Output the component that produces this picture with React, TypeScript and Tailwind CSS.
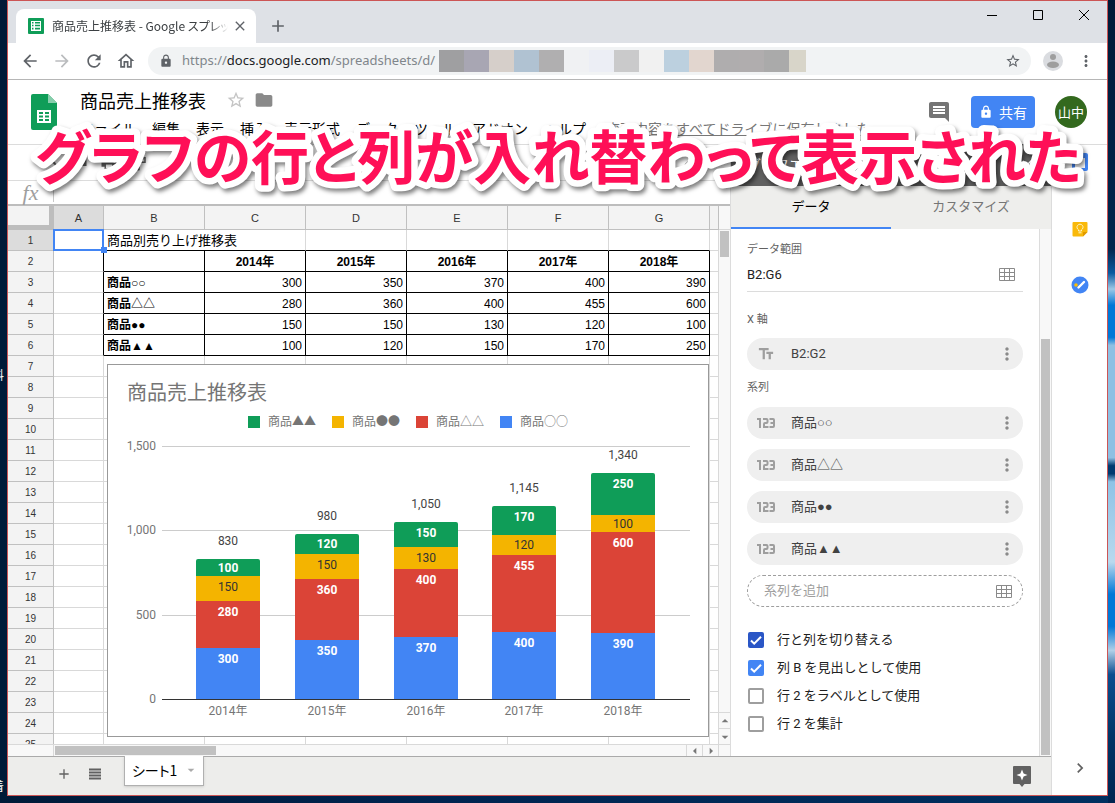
import React, { useState } from 'react';
import {
  MdAdd,
  MdArrowBack,
  MdArrowDropDown,
  MdArrowDropUp,
  MdArrowForward,
  MdArrowLeft,
  MdArrowRight,
  MdChevronRight,
  MdClose,
  MdComment,
  MdFolder,
  MdFormatPaint,
  MdKeyboardArrowUp,
  MdLock,
  MdMoreVert,
  MdOutlineHome,
  MdPrint,
  MdRedo,
  MdRefresh,
  MdStarBorder,
  MdTextFields,
  MdUndo,
} from 'react-icons/md';

const YEARS = ['2014年', '2015年', '2016年', '2017年', '2018年'];
const PRODUCTS = [
  { name: '商品○○', values: [300, 350, 370, 400, 390], color: '#4285f4', text: '#fff' },
  { name: '商品△△', values: [280, 360, 400, 455, 600], color: '#db4437', text: '#fff' },
  { name: '商品●●', values: [150, 150, 130, 120, 100], color: '#f4b400', text: '#333' },
  { name: '商品▲▲', values: [100, 120, 150, 170, 250], color: '#0f9d58', text: '#fff' },
];
const COLUMNS = ['A', 'B', 'C', 'D', 'E', 'F', 'G'];
const MENUS = ['ファイル', '編集', '表示', '挿入', '表示形式', 'データ', 'ツール', 'アドオン', 'ヘルプ'];
const MOSAIC = [
  'bg-[#9f9fa1]', 'bg-[#a8a6b3]', 'bg-[#d6cfca]', 'bg-[#b0c2d2]', 'bg-[#b0afb0]', 'bg-[#f0f1f3]',
  'bg-[#eceef5]', 'bg-[#cacacb]', 'bg-[#f1f1f1]', 'bg-[#bcd0df]', 'bg-[#e2d6cf]', 'bg-[#afadae]',
  'bg-[#b0adae]', 'bg-[#aaaaaa]',
];

const TabStrip = () => (
  <div className="flex h-[42px] shrink-0 bg-[#dee1e6] pl-2">
    <div className="relative mt-2 flex w-60 items-center rounded-t-lg bg-white pr-2 pl-3">
      <svg viewBox="0 0 16 16" className="h-4 w-4 shrink-0">
        <rect width="16" height="16" rx="1" fill="#0f9d58" />
        <path d="M3 3h10v10H3zM4 4v1.5h1.5V4zM7 4v1.5h5V4zM4 6.8v1.4h1.5V6.8zM7 6.8v1.4h5V6.8zM4 9.8v1.7h1.5V9.8zM7 9.8v1.7h5V9.8z" fill="#fff" fillRule="evenodd" />
      </svg>
      <span className="ml-2 min-w-0 flex-1 overflow-hidden text-xs whitespace-nowrap text-[#3c4043] [font-feature-settings:'palt'] [mask-image:linear-gradient(to_right,#000_90%,transparent)]">
        商品売上推移表 - Google スプレッ
      </span>
      <button aria-label="タブを閉じる" className="ml-1 text-[#5f6368]">
        <MdClose className="h-4 w-4" />
      </button>
    </div>
    <button aria-label="新しいタブ" className="mt-2 ml-3 text-[#5f6368]">
      <MdAdd className="h-5 w-5" />
    </button>
    <div className="ml-auto flex h-7 items-center gap-9 pr-[18px] text-black">
      <button aria-label="最小化">
        <svg viewBox="0 0 10 10" className="h-2.5 w-2.5"><path d="M0 5.5h10" stroke="currentColor" /></svg>
      </button>
      <button aria-label="最大化">
        <svg viewBox="0 0 10 10" className="h-2.5 w-2.5"><path d="M.5.5h9v9h-9z" fill="none" stroke="currentColor" /></svg>
      </button>
      <button aria-label="閉じる">
        <svg viewBox="0 0 10 10" className="h-2.5 w-2.5"><path d="M0 0l10 10M10 0L0 10" stroke="currentColor" /></svg>
      </button>
    </div>
  </div>
);

const AddressBar = () => (
  <div className="flex h-[37px] shrink-0 items-center border-b border-[#b6b6b6] pr-3 pl-3 text-[#5f6368]">
    <div className="flex gap-3">
      <button aria-label="戻る"><MdArrowBack className="h-5 w-5" /></button>
      <button aria-label="進む" className="text-[#babcbe]"><MdArrowForward className="h-5 w-5" /></button>
      <button aria-label="再読み込み"><MdRefresh className="h-5 w-5" /></button>
      <button aria-label="ホーム"><MdOutlineHome className="h-5 w-5" /></button>
    </div>
    <label className="ml-3 flex h-7 min-w-0 flex-1 items-center rounded-full bg-[#f1f3f4] pr-2.5 pl-[11px]">
      <MdLock className="h-3.5 w-3.5 shrink-0" />
      <span className="ml-[9px] font-[family-name:'Noto_Sans',sans-serif] text-[13px] text-[#80868b]">
        https://<span className="text-[#202124]">docs.google.com</span>/spreadsheets/d/
      </span>
      <span className="ml-1 flex h-[22px] shrink-0">
        {MOSAIC.map((c) => (
          <span key={c} className={`w-[25px] ${c}`} />
        ))}
        <span className="w-[17px] bg-[#d8d5c9]" />
      </span>
      <input aria-label="アドレス" className="min-w-0 flex-1 bg-transparent outline-none" />
      <MdStarBorder className="h-4 w-4 shrink-0" />
    </label>
    <button aria-label="プロフィール" className="ml-3">
      <svg viewBox="0 0 20 20" className="h-5 w-5">
        <circle cx="10" cy="10" r="10" fill="#dadce0" />
        <circle cx="10" cy="6" r="3" fill="#9e9e9e" />
        <ellipse cx="10" cy="13.8" rx="6" ry="3.2" fill="#9e9e9e" />
      </svg>
    </button>
    <button aria-label="メニュー" className="ml-3.5"><MdMoreVert className="h-[18px] w-[18px]" /></button>
  </div>
);

const DocHeader = () => (
  <header className="flex h-[65px] shrink-0 border-b border-[#dcdcdc] pr-5 pl-[23px]">
    <svg viewBox="0 0 26 36" className="mt-3.5 h-9 w-[26px] shrink-0">
      <path d="M2 0h15l9 9v25a2 2 0 0 1-2 2H2a2 2 0 0 1-2-2V2a2 2 0 0 1 2-2z" fill="#0f9d58" />
      <path d="M17 0l9 9h-9z" fill="#87ceac" />
      <path d="M6 16h14v13H6zM8 18v2h4v-2zM14 18v2h4v-2zM8 21.500v2h4v-2zM14 21.500v2h4v-2zM8 25v2h4v-2zM14 25v2h4v-2z" fill="#fff" fillRule="evenodd" />
    </svg>
    <div className="ml-[23px] pt-1.5">
      <div className="flex h-7 items-center">
        <h1 className="text-lg text-black">商品売上推移表</h1>
        <button aria-label="スターを付ける" className="ml-5 text-[#c4c4c4]"><MdStarBorder className="h-5 w-5" /></button>
        <button aria-label="移動" className="ml-2 text-[#8a8a8a]"><MdFolder className="h-5 w-5" /></button>
      </div>
      <nav className="flex h-7 items-center gap-4 text-sm whitespace-nowrap text-black">
        {MENUS.map((m) => (
          <button key={m}>{m}</button>
        ))}
        <a href="#saved" className="ml-1 text-[#777] underline">変更内容をすべてドライブに保存しました</a>
      </nav>
    </div>
    <div className="ml-auto flex items-center gap-5">
      <button aria-label="コメント" className="text-[#757575]"><MdComment className="h-6 w-6" /></button>
      <button className="flex h-8 items-center gap-1.5 rounded-sm bg-[#4285f4] px-2 text-sm whitespace-nowrap text-white">
        <MdLock className="h-3.5 w-3.5" />共有
      </button>
      <button className="h-8 w-8 rounded-full bg-[#33691e] text-[13px] whitespace-nowrap text-white">山中</button>
    </div>
  </header>
);

const SheetToolbar = () => (
  <>
    <div className="flex h-9 shrink-0 items-center gap-3 border-b border-[#dcdcdc] px-8 text-[#616161]">
      <MdUndo className="h-[18px] w-[18px]" />
      <MdRedo className="h-[18px] w-[18px]" />
      <MdPrint className="h-[18px] w-[18px]" />
      <MdFormatPaint className="h-[18px] w-[18px]" />
      <span className="ml-40 text-xs">.0</span>
      <span className="ml-40 text-xs">10</span>
      <MdKeyboardArrowUp className="ml-auto h-[18px] w-[18px]" />
    </div>
    <label className="flex h-[25px] shrink-0 items-center border-b-2 border-[#bdbdbd]">
      <span className="w-[45px] text-center font-[family-name:'Liberation_Serif',serif] text-[22px] leading-5 text-[#9e9e9e] italic">fx</span>
      <input aria-label="数式" className="h-[18px] flex-1 border-l border-[#c8c8c8] px-2 text-xs outline-none" />
    </label>
  </>
);

// plot area of the embedded chart
const BASE = 334;
const SCALE = 253 / 1500;

const Chart = () => (
  <svg
    viewBox="0 0 600 371"
    role="img"
    aria-label="商品売上推移表"
    className="absolute top-[158px] left-[99px] h-[373px] w-[602px] border border-[#999] bg-white font-[family-name:Roboto,'Noto_Sans_CJK_JP',sans-serif] text-xs"
  >
    <text x="19" y="35" fontSize="20" fill="#757575">商品売上推移表</text>
    {[...PRODUCTS].reverse().map((p, i) => (
      <g key={p.name}>
        <rect x={140 + i * 84} y="51" width="12" height="12" fill={p.color} />
        <text x={160 + i * 84} y="61" fill="#757575">{p.name}</text>
      </g>
    ))}
    {[1500, 1000, 500].map((v) => (
      <g key={v}>
        <rect x="54" y={Math.round(BASE - v * SCALE)} width="528" height="1" fill="#ccc" />
        <text x="48" y={Math.round(BASE - v * SCALE) + 4} textAnchor="end" fill="#757575">{v.toLocaleString('en-US')}</text>
      </g>
    ))}
    <text x="48" y="338" textAnchor="end" fill="#757575">0</text>
    {YEARS.map((year, i) => {
      const x = Math.round(88 + i * 98.8);
      const total = PRODUCTS.reduce((s, p) => s + p.values[i], 0);
      const totalTop = Math.round(BASE - total * SCALE);
      let sum = 0;
      return (
        <g key={year} textAnchor="middle">
          {PRODUCTS.map((p, k) => {
            const bottom = Math.round(BASE - sum * SCALE);
            sum += p.values[i];
            const top = Math.round(BASE - sum * SCALE);
            const h = bottom - top;
            const last = k === PRODUCTS.length - 1;
            return (
              <g key={p.name}>
                {last ? (
                  <path d={`M${x} ${bottom}V${top + 2}q0-2 2-2h60q2 0 2 2V${bottom}z`} fill={p.color} />
                ) : (
                  <rect x={x} y={top} width="64" height={h} fill={p.color} />
                )}
                <text x={x + 32} y={top + Math.min(10.500, h / 2) + 4} fill={p.text} fontWeight={p.text === '#fff' ? 700 : 400}>
                  {p.values[i]}
                </text>
              </g>
            );
          })}
          <text x={x + 32} y={totalTop - 14} fill="#444">{total.toLocaleString('en-US')}</text>
          <text x={x + 32} y="350" fill="#757575">{year}</text>
        </g>
      );
    })}
    <rect x="54" y={BASE} width="528" height="1" fill="#333" />
  </svg>
);

const Cell: React.FC<{ n: number; c: number }> = ({ n, c }) => {
  const inTable = n >= 2 && n <= 6 && c >= 1;
  const right = n >= 2 && n <= 6 ? 'border-r-black' : 'border-r-[#d9d9d9]';
  const bottom = inTable || (n === 1 && c >= 1) ? 'border-b-black' : 'border-b-[#d9d9d9]';
  const base = `h-[21px] border-r border-b px-[3px] pt-px ${right} ${bottom}`;
  if (n === 1 && c === 0) {
    return (
      <td className={`relative ${base}`}>
        <div className="absolute -top-px -left-px h-[22px] w-[51px] border-2 border-[#4285f4]" />
        <div className="absolute -right-1 -bottom-[3px] z-10 h-1.5 w-1.5 bg-[#4285f4]" />
      </td>
    );
  }
  if (n === 1 && c === 1) return <td colSpan={2} className={`text-[13px] ${base}`}>商品別売り上げ推移表</td>;
  if (n === 2 && c >= 2) return <td className={`text-center font-bold ${base}`}>{YEARS[c - 2]}</td>;
  if (inTable && n > 2 && c === 1) return <td className={`font-bold ${base}`}>{PRODUCTS[n - 3].name}</td>;
  if (inTable && n > 2) return <td className={`text-right ${base}`}>{PRODUCTS[n - 3].values[c - 2]}</td>;
  return <td className={base} />;
};

const Sheet = () => (
  <div className="flex min-h-0 flex-1 flex-col">
    <div className="flex min-h-0 flex-1">
      <div className="relative min-w-0 flex-1 overflow-hidden">
        <table className="w-full table-fixed border-separate border-spacing-0 font-[family-name:'Liberation_Sans','Noto_Sans_CJK_JP',sans-serif] text-xs leading-4 whitespace-nowrap text-black">
          <colgroup>
            <col className="w-[46px]" />
            <col className="w-[50px]" />
            {COLUMNS.slice(1).map((c) => (
              <col key={c} className="w-[101px]" />
            ))}
            <col />
          </colgroup>
          <thead>
            <tr className="h-6 bg-[#f3f3f3] text-[11px] text-[#333]">
              <th className="border-r-[5px] border-b-[5px] border-[#bdbdbd]" />
              {COLUMNS.map((c) => (
                <th key={c} className={`border-r border-b border-[#c0c0c0] font-normal ${c === 'A' ? 'bg-[#dcdcdc]' : ''}`}>{c}</th>
              ))}
              <th className="border-r border-b border-[#c0c0c0]" />
            </tr>
          </thead>
          <tbody>
            {Array.from({ length: 25 }, (_, i) => i + 1).map((n) => (
              <tr key={n} className="h-[21px]">
                <th className={`border-r border-b border-[#c0c0c0] pt-px text-[10px] font-normal text-[#333] ${n === 1 ? 'bg-[#dcdcdc]' : 'bg-[#f3f3f3]'}`}>{n}</th>
                {COLUMNS.map((c, i) => (n === 1 && i === 2 ? null : <Cell key={c} n={n} c={i} />))}
                <td className="border-r border-b border-[#d9d9d9]" />
              </tr>
            ))}
          </tbody>
        </table>
        <Chart />
      </div>
      <div className="flex w-[11px] flex-col bg-[#f8f8f8] text-[#777]">
        <div className="h-6 border-b border-[#d9d9d9]" />
        <div className="mx-px mt-px h-[26px] bg-[#c1c1c1]" />
        <button aria-label="上へ" className="mt-auto flex h-4 items-center justify-center border-t border-[#d9d9d9]"><MdArrowDropUp className="h-4 w-4 shrink-0" /></button>
        <button aria-label="下へ" className="flex h-4 items-center justify-center border-t border-[#d9d9d9]"><MdArrowDropDown className="h-4 w-4 shrink-0" /></button>
      </div>
    </div>
    <div className="flex h-3 shrink-0 border-t border-[#d9d9d9] bg-[#f8f8f8] text-[#777]">
      <div className="w-[46px] border-r border-[#d9d9d9]" />
      <div className="mt-px ml-px h-[9px] w-[161px] bg-[#c1c1c1]" />
      <button aria-label="左へ" className="ml-auto flex w-4 items-center justify-center border-l border-[#d9d9d9]"><MdArrowLeft className="h-4 w-4 shrink-0" /></button>
      <button aria-label="右へ" className="flex w-4 items-center justify-center border-l border-[#d9d9d9]"><MdArrowRight className="h-4 w-4 shrink-0" /></button>
      <div className="w-3 border-l border-[#d9d9d9]" />
    </div>
  </div>
);

const GridIcon = () => (
  <svg viewBox="0 0 16 13" className="h-[13px] w-4">
    <path d="M.5.5h15v12H.5zM.5 4.500h15M.5 8.500h15M5.500.5v12M10.500.5v12" fill="none" stroke="#8a8a8a" />
  </svg>
);

const NumberIcon = () => (
  <svg viewBox="0 0 18 10" className="h-2.5 w-[18px]" fill="none" stroke="currentColor" strokeWidth="2">
    <path d="M0 1h3v9" />
    <path d="M6 1h3.500q1 0 1 1v2q0 1-1 1H8q-1 0-1 1v3h4.500" />
    <path d="M12.500 1H16q1 0 1 1v6q0 1-1 1h-3.500M13.500 5H16.500" />
  </svg>
);

const Pill: React.FC<{ icon: React.ReactNode; label: string }> = ({ icon, label }) => (
  <li className="flex h-8 items-center rounded-full bg-[#efefef] pr-1.5 text-[13px] text-[#424242]">
    <span className="flex w-11 shrink-0 pl-2.5 text-[#9e9e9e]">{icon}</span>
    <span className="flex-1">{label}</span>
    <button aria-label={`${label} のオプション`} className="text-[#8a8a8a]"><MdMoreVert className="h-5 w-5" /></button>
  </li>
);

const OPTIONS = [
  { label: '行と列を切り替える', checked: true, box: 'checked:border-[#2a56c6] checked:bg-[#2a56c6]' },
  { label: '列 B を見出しとして使用', checked: true, box: 'checked:border-[#4285f4] checked:bg-[#4285f4]' },
  { label: '行 2 をラベルとして使用', checked: false, box: 'checked:border-[#4285f4] checked:bg-[#4285f4]' },
  { label: '行 2 を集計', checked: false, box: 'checked:border-[#4285f4] checked:bg-[#4285f4]' },
];

const ChartEditor = () => {
  const [tab, setTab] = useState('データ');
  return (
    <aside className="-mt-px flex w-[321px] shrink-0 flex-col border-l border-[#dcdcdc] font-[family-name:Roboto,'Liberation_Sans','Noto_Sans_CJK_JP',sans-serif]">
      <div className="flex h-[42px] shrink-0 items-center justify-between bg-[#616161] px-4 text-sm text-white">
        <h2>グラフエディタ</h2>
        <button aria-label="閉じる"><MdClose className="h-4 w-4" /></button>
      </div>
      <div className="flex h-[43px] shrink-0 bg-[#eeeeec] text-[13px]">
        {['データ', 'カスタマイズ'].map((t) => (
          <button
            key={t}
            onClick={() => setTab(t)}
            className={`flex-1 border-b-2 ${tab === t ? 'border-[#4285f4] text-black' : 'border-transparent text-[#757575]'}`}
          >
            {t}
          </button>
        ))}
      </div>
      <div className="flex min-h-0 flex-1">
        <div className="min-w-0 flex-1 px-4 pt-[13px]">
          <label htmlFor="range" className="block text-[11px] leading-4 text-[#616161]">データ範囲</label>
          <div className="flex h-[34px] items-center border-b border-[#dcdcdc] pr-2">
            <input id="range" defaultValue="B2:G6" className="min-w-0 flex-1 text-[13px] text-[#212121] outline-none" />
            <button aria-label="範囲を選択"><GridIcon /></button>
          </div>
          <h3 className="mt-5 mb-2.5 text-[11px] leading-4 text-[#616161]">X 軸</h3>
          <ul>
            <Pill icon={<MdTextFields className="h-[18px] w-[18px]" />} label="B2:G2" />
          </ul>
          <h3 className="mt-2.5 mb-[11px] text-[11px] leading-4 text-[#616161]">系列</h3>
          <ul className="flex flex-col gap-2.5">
            {PRODUCTS.map((p) => (
              <Pill key={p.name} icon={<NumberIcon />} label={p.name} />
            ))}
            <li className="flex h-8 items-center rounded-full border border-dashed border-[#9e9e9e] pr-2.5 pl-4">
              <input aria-label="系列を追加" placeholder="系列を追加" className="min-w-0 flex-1 text-[13px] outline-none placeholder:text-[#9e9e9e]" />
              <button aria-label="系列の範囲を選択"><GridIcon /></button>
            </li>
          </ul>
          <div className="mt-[19px]">
            {OPTIONS.map((o) => (
              <label key={o.label} className="flex h-7 items-center gap-[13px] pl-px text-[13px] text-[#212121]">
                <span className="relative flex h-4 w-4">
                  <input type="checkbox" defaultChecked={o.checked} className={`peer h-4 w-4 appearance-none rounded-[2px] border-2 border-[#9e9e9e] ${o.box}`} />
                  <svg viewBox="0 0 16 16" className="pointer-events-none absolute inset-0 hidden h-4 w-4 peer-checked:block">
                    <path d="M3 8.500l3.200 3.200L13 4.800" fill="none" stroke="#fff" strokeWidth="2" />
                  </svg>
                </span>
                {o.label}
              </label>
            ))}
          </div>
        </div>
        <div className="flex w-3 shrink-0 flex-col justify-end border-l border-[#dcdcdc] bg-[#f8f8f8] px-px">
          <div className="mb-px h-[79%] bg-[#c1c1c1]" />
        </div>
      </div>
    </aside>
  );
};

const BottomBar = () => (
  <footer className="flex h-[39px] shrink-0 items-center border-t border-[#aaa] bg-[#ededeb] pr-[17px] pl-12 text-[#616161]">
    <div className="flex items-center gap-[17px] pb-1">
      <button aria-label="シートを追加"><MdAdd className="h-4 w-4" /></button>
      <button aria-label="すべてのシート">
        <svg viewBox="0 0 12 12" className="h-3 w-3"><path d="M0 1.500h12M0 4.500h12M0 7.500h12M0 10.500h12" stroke="currentColor" strokeWidth="2" /></svg>
      </button>
    </div>
    <button className="-mt-px ml-[23px] flex h-[30px] items-center gap-1.5 self-start border border-t-0 border-[#b0b0b0] bg-white pr-1 pb-0.5 pl-[7px] text-sm whitespace-nowrap text-black shadow-sm [font-feature-settings:'palt']">
      シート1<MdArrowDropDown className="h-4 w-4 text-[#aaa]" />
    </button>
    <button aria-label="データ探索" className="ml-auto">
      <svg viewBox="0 0 24 24" className="h-6 w-6">
        <path d="M4 2h16a1 1 0 0 1 1 1v16a1 1 0 0 1-1 1h-5.500L12 23l-2.500-3H4a1 1 0 0 1-1-1V3a1 1 0 0 1 1-1z" fill="#616161" />
        <path d="M12 5.500l1.600 3.900L17.500 11l-3.900 1.600L12 16.500l-1.600-3.900L6.500 11l3.900-1.600z" fill="#fff" />
      </svg>
    </button>
  </footer>
);

const SideRail = () => (
  <nav className="flex w-14 shrink-0 flex-col items-center border-l border-[#dcdcdc] pt-2">
    <button aria-label="カレンダー">
      <svg viewBox="0 0 18 18" className="h-[18px] w-[18px]">
        <rect x="1" width="16" height="18" rx="2" fill="#4285f4" />
        <path d="M4 5h10v10H4z" fill="#fff" />
      </svg>
    </button>
    <button aria-label="Keep" className="mt-[50px]">
      <svg viewBox="0 0 16 16" className="h-4 w-4">
        <path d="M1.500 1h13a1 1 0 0 1 1 1v9L11 15.500H1.500a1 1 0 0 1-1-1V2a1 1 0 0 1 1-1z" fill="#f9b90a" />
        <path d="M11 15.500V11h4.500z" fill="#e09a00" />
        <path d="M6.500 10V8.800a3 3 0 1 1 3 0V10zM6.500 11.800h3" fill="none" stroke="#fff3c4" />
      </svg>
    </button>
    <button aria-label="ToDo リスト" className="mt-[39px]">
      <svg viewBox="0 0 18 18" className="h-[18px] w-[18px]">
        <circle cx="9" cy="9" r="8.500" fill="#4285f4" />
        <path d="M7.500 11.500L13 6" stroke="#fff" strokeWidth="2.400" strokeLinecap="round" />
        <circle cx="5" cy="9" r="1.800" fill="#fbbc04" />
      </svg>
    </button>
    <button aria-label="サイドパネルを閉じる" className="mt-auto mb-[17px] text-[#616161]"><MdChevronRight className="h-5 w-5" /></button>
  </nav>
);

const Caption = () => (
  <svg className="pointer-events-none absolute top-[110px] left-0 h-24 w-full overflow-visible [filter:drop-shadow(2px_3px_2px_rgba(0,0,0,0.5))]">
    <text
      x="35"
      y="69"
      fill="#ff0f57"
      stroke="#fff"
      strokeWidth="13"
      strokeLinejoin="round"
      className="text-[58px] font-bold [font-feature-settings:'palt'] [paint-order:stroke]"
    >
      グラフの行と列が入れ替わって表示された
    </text>
  </svg>
);

export default function App() {
  return (
    <div className="relative h-screen min-h-[600px] overflow-hidden bg-[linear-gradient(to_right,#001a38,#002450_40%,#003060)] font-[family-name:'Noto_Sans_CJK_JP',sans-serif]">
      <div className="absolute top-0 right-0 h-full w-[7px] bg-[linear-gradient(#001a38,#00264e_31%,#0a5aa0_34%,#9cc8e6_36%,#0078d7_38%,#0078d7_42%,#8ec0e3_43%,#8ec0e3_57%,#003a70_58%,#003a70_59%,#8ec3e6_60%,#b9d9ee_70%,#0078d7_74%,#0078d7_78%,#b0d0e8_81%,#0a4e90_84%,#003466_92%,#002450)]" />
      <span className="absolute top-[367px] -left-2 text-xs text-white">料</span>
      <span className="absolute top-[778px] -left-2 text-xs text-white">着</span>
      <div className="relative mx-[7px] flex h-[calc(100%-7px)] flex-col border border-[#cc5555] bg-white">
        <TabStrip />
        <AddressBar />
        <DocHeader />
        <div className="flex min-h-0 flex-1">
          <div className="flex min-w-0 flex-1 flex-col">
            <div className="flex min-h-0 flex-1">
              <main className="flex min-w-0 flex-1 flex-col">
                <SheetToolbar />
                <Sheet />
              </main>
              <ChartEditor />
            </div>
            <BottomBar />
          </div>
          <SideRail />
        </div>
      </div>
      <Caption />
    </div>
  );
}
